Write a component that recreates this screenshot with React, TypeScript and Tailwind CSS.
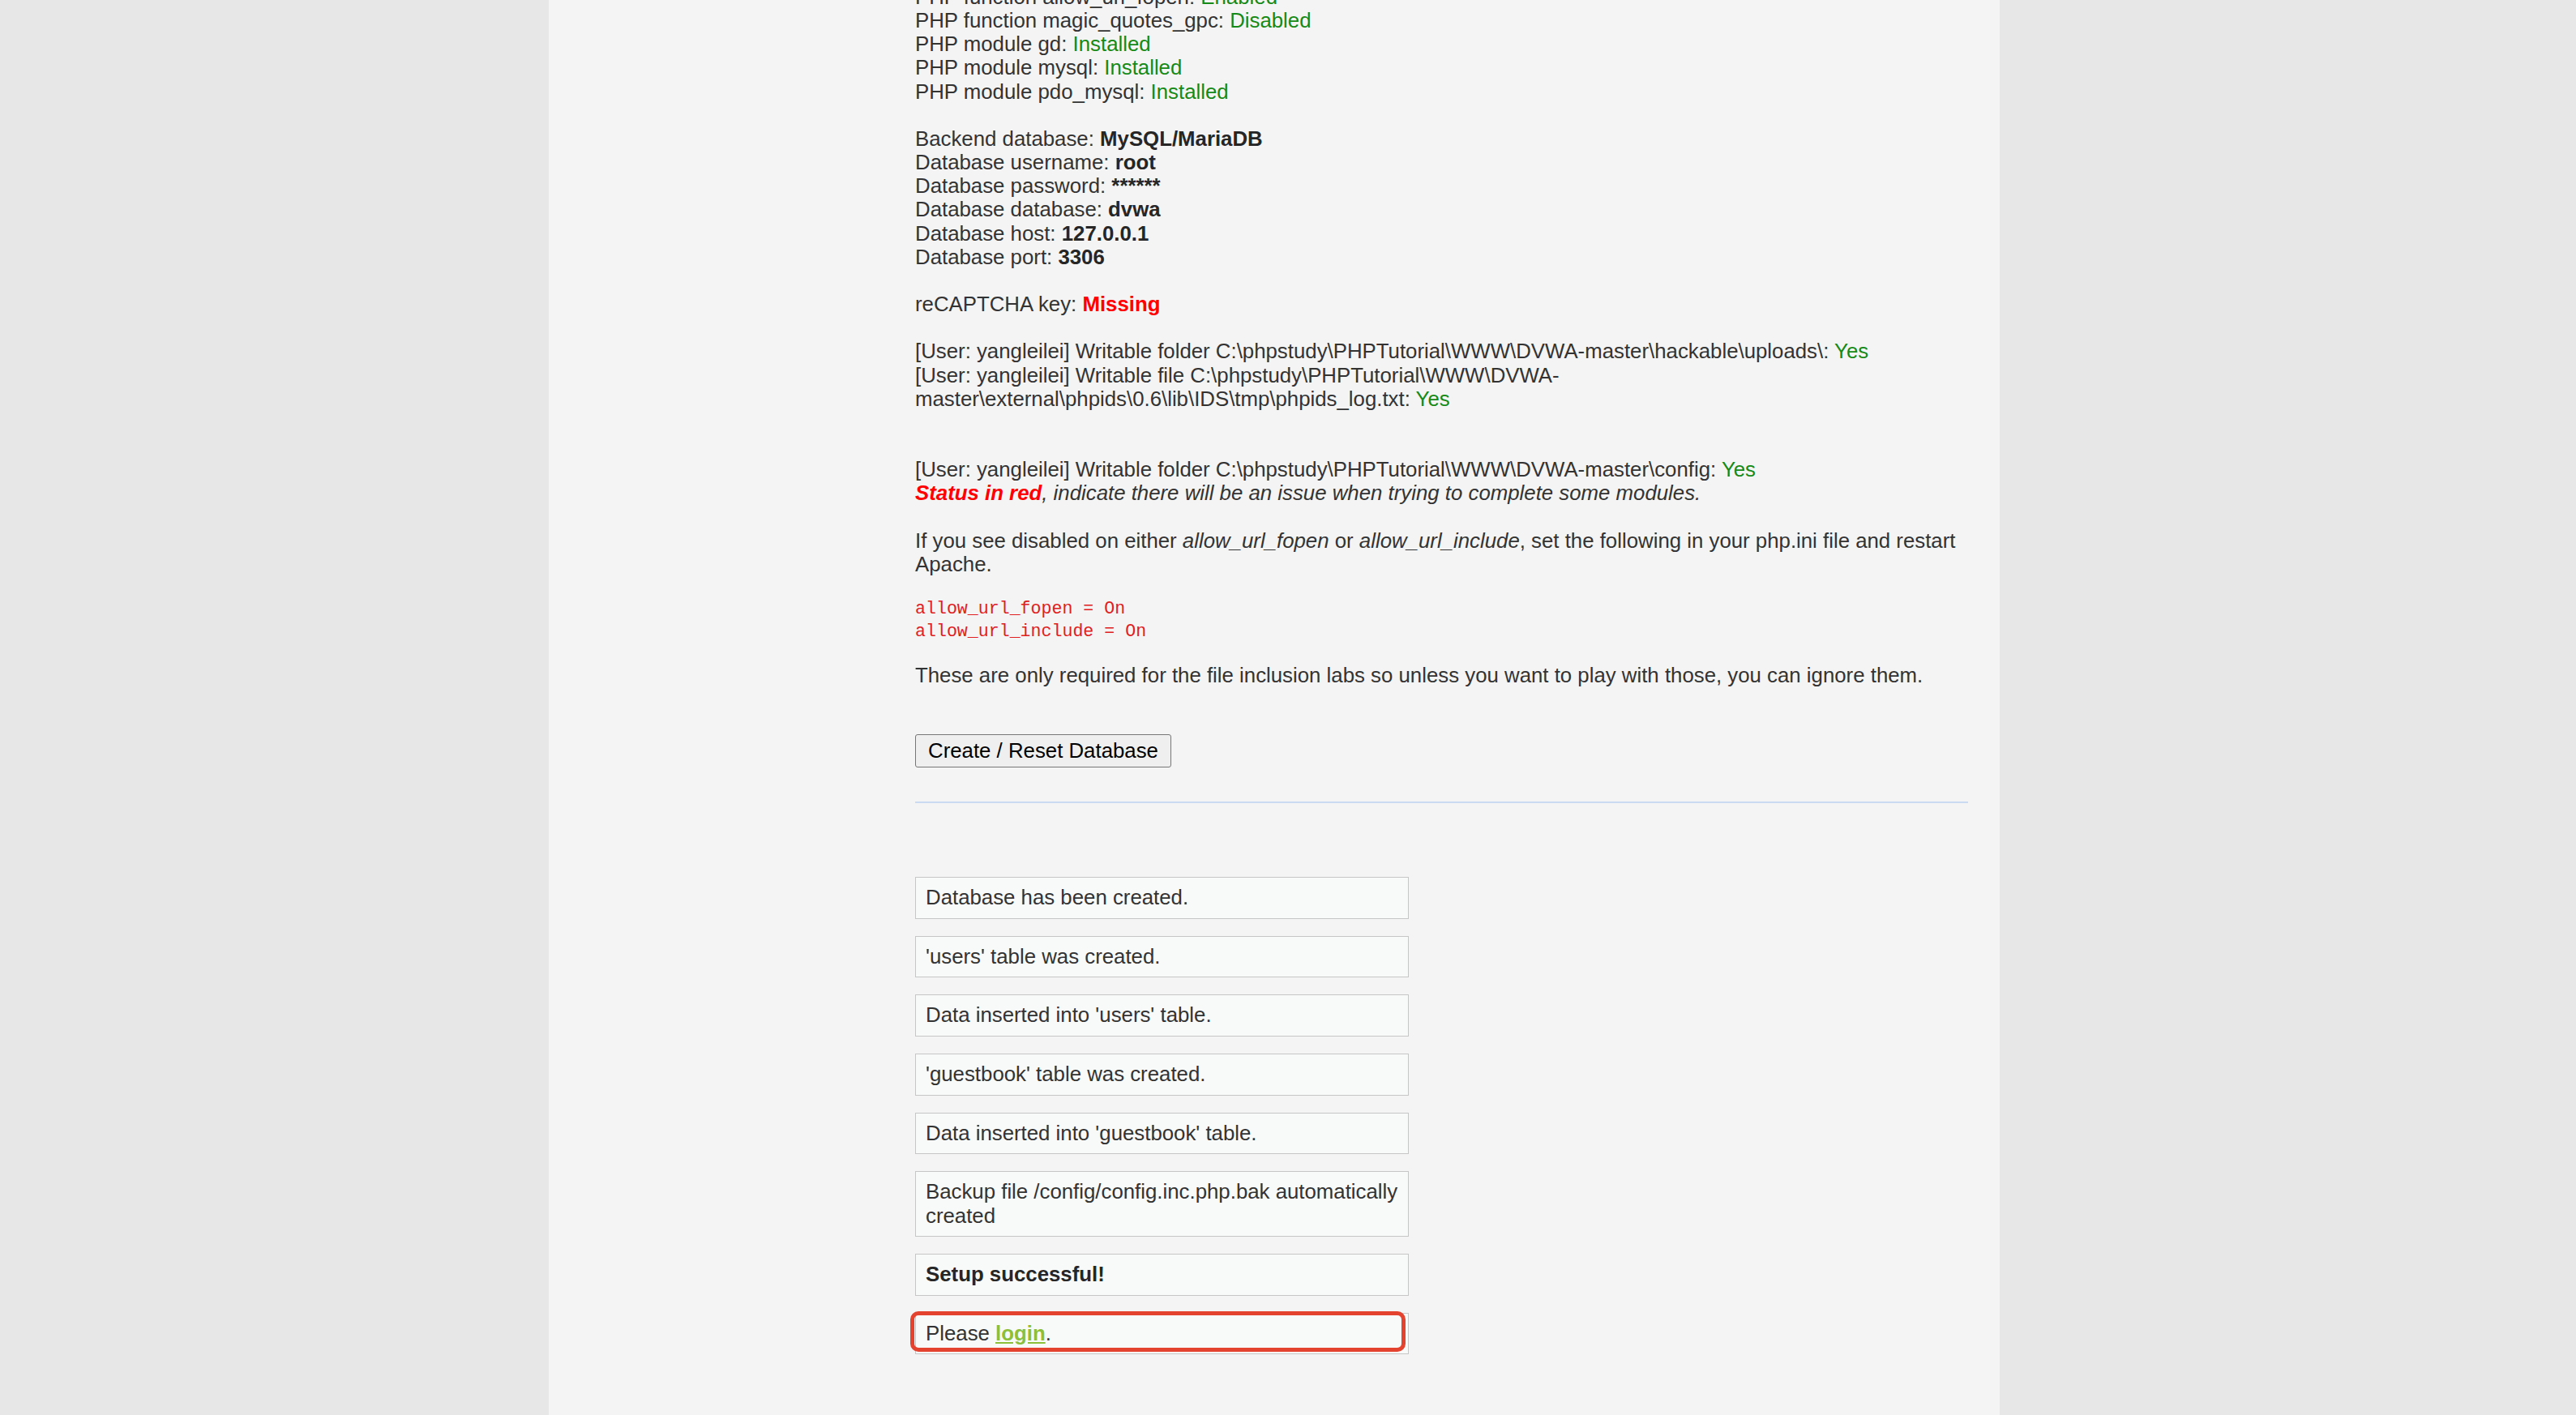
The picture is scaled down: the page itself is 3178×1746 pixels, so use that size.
import React from "react";

const G = ({ children }: { children: React.ReactNode }) => (
  <span className="text-[#168a16]">{children}</span>
);
const B = ({ children }: { children: React.ReactNode }) => (
  <span className="font-bold text-[#262626]">{children}</span>
);

const Box = ({ children, hl }: { children: React.ReactNode; hl?: boolean }) => (
  <div className="relative border border-[#c6c6c6] bg-[#f8f9f9] pl-[12px] pr-[4px] pt-[10px] pb-[10.5px]">
    {children}
    {hl && (
      <div className="pointer-events-none absolute -left-[7px] right-[3px] -top-[3px] bottom-[2px] rounded-[10px] border-[5px] border-[#e3432f]" />
    )}
  </div>
);

export default function App() {
  return (
    <div
      className="h-[1746px] overflow-hidden bg-[#e7e7e7] pl-[677px] text-[25.8px] leading-[29.15px] text-[#333]"
      style={{ fontFamily: '"Liberation Sans", Arial, sans-serif' }}
    >
      <div className="flex h-full w-[1790px] bg-[#f4f4f4]">
        <div className="w-[452px] shrink-0" />
        <div className="w-[1299px] -mt-[18px]">
          <div>
            PHP function allow_url_fopen: <G>Enabled</G>
            <br />
            PHP function magic_quotes_gpc: <G>Disabled</G>
            <br />
            PHP module gd: <G>Installed</G>
            <br />
            PHP module mysql: <G>Installed</G>
            <br />
            PHP module pdo_mysql: <G>Installed</G>
            <br />
            <br />
            Backend database: <B>MySQL/MariaDB</B>
            <br />
            Database username: <B>root</B>
            <br />
            Database password: <B>******</B>
            <br />
            Database database: <B>dvwa</B>
            <br />
            Database host: <B>127.0.0.1</B>
            <br />
            Database port: <B>3306</B>
            <br />
            <br />
            reCAPTCHA key: <span className="font-bold text-[#f00]">Missing</span>
            <br />
            <br />
            [User: yangleilei] Writable folder C:\phpstudy\PHPTutorial\WWW\DVWA-master\hackable\uploads\: <G>Yes</G>
            <br />
            [User: yangleilei] Writable file C:\phpstudy\PHPTutorial\WWW\DVWA-master\external\phpids\0.6\lib\IDS\tmp\phpids_log.txt: <G>Yes</G>
            <br />
            <br />
            <br />
            [User: yangleilei] Writable folder C:\phpstudy\PHPTutorial\WWW\DVWA-master\config: <G>Yes</G>
            <br />
            <i>
              <span className="font-bold text-[#f00]">Status in red</span>, indicate there will be an issue when trying to complete some modules.
            </i>
            <br />
            <br />
            If you see disabled on either <i>allow_url_fopen</i> or <i>allow_url_include</i>, set the following in your php.ini file and restart Apache.
          </div>
          <pre
            className="my-[26px] text-[21.6px] leading-[28px] text-[#e02020]"
            style={{ fontFamily: '"Liberation Mono", "Courier New", monospace' }}
          >
            {"allow_url_fopen = On\nallow_url_include = On"}
          </pre>
          <div>These are only required for the file inclusion labs so unless you want to play with those, you can ignore them.</div>
          <div className="mt-[58px]">
            <button className="h-[41px] rounded-[3px] border border-[#767676] bg-[#efefef] px-[15px] text-[25.8px] leading-[29px] text-black">
              Create / Reset Database
            </button>
          </div>
          <div className="mt-[42px] h-[2px] bg-[#cadaf0]" />
          <div className="mt-[91px] flex w-[609px] flex-col gap-[21px]">
            <Box>Database has been created.</Box>
            <Box>'users' table was created.</Box>
            <Box>Data inserted into 'users' table.</Box>
            <Box>'guestbook' table was created.</Box>
            <Box>Data inserted into 'guestbook' table.</Box>
            <Box>Backup file /config/config.inc.php.bak automatically created</Box>
            <Box>
              <B>Setup successful!</B>
            </Box>
            <Box hl>
              Please{" "}
              <a href="#" className="font-bold text-[#8cbf3a] underline">
                login
              </a>
              .
            </Box>
          </div>
        </div>
      </div>
    </div>
  );
}
